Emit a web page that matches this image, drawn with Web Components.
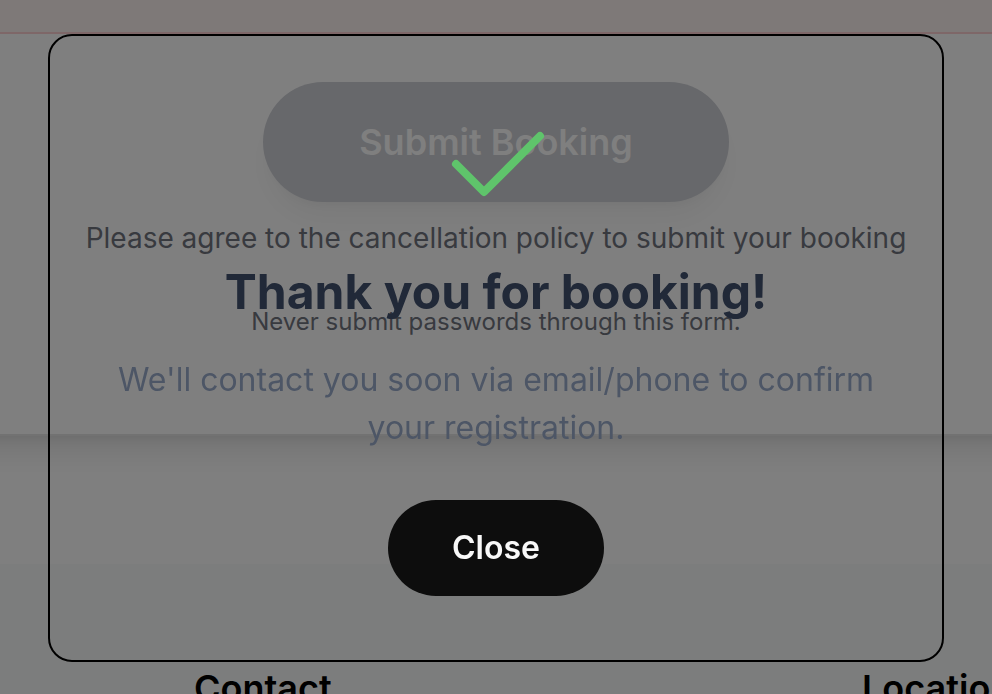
<!DOCTYPE html>
<html lang="en">
<head>
<meta charset="utf-8">
<meta name="viewport" content="width=device-width, initial-scale=1">
<title>Booking</title>
<style>
html, body { margin: 0; height: 100%; overflow: hidden; }
body { font-family: Inter, "Liberation Sans", sans-serif; background: #fff; color: #000; }
</style>
</head>
<body>
<booking-page>
  <booking-form>
    <span slot="action">Submit Booking</span>
    <span slot="hint">Please agree to the cancellation policy to submit your booking</span>
    <span slot="note">Never submit passwords through this form.</span>
  </booking-form>
  <page-footer slot="footer">
    <span slot="first">Contact</span>
    <span slot="second">Location</span>
  </page-footer>
  <thank-you-dialog slot="overlay">
    <span slot="title">Thank you for booking!</span>
    <span slot="message">We'll contact you soon via email/phone to confirm your registration.</span>
    <span slot="close">Close</span>
  </thank-you-dialog>
</booking-page>
<script>
function define(name, html) {
  const template = document.createElement('template');
  template.innerHTML = html;
  customElements.define(name, class extends HTMLElement {
    constructor() {
      super();
      this.attachShadow({ mode: 'open' }).append(template.content.cloneNode(true));
    }
  });
}

define('booking-page', `
<style>
  :host { display: block; height: 100vh; overflow: hidden; }
  .banner { height: 32px; background: #fdf3f0; border-bottom: 2px solid #fed0d2; }
  main { padding-bottom: 128px; }
</style>
<div class="banner"></div>
<main><slot></slot></main>
<slot name="footer"></slot>
<slot name="overlay"></slot>`);

define('booking-form', `
<style>
  :host { display: block; }
  form {
    display: flex; flex-direction: column; align-items: center;
    margin: 0 -48px; padding: 48px 96px 96px; text-align: center; background: #fff;
    border-bottom: 2px solid #e5e5e5;
    box-shadow: 0 20px 30px -6px rgba(0,0,0,.1), 0 8px 12px -8px rgba(0,0,0,.1);
  }
  button {
    padding: 32px 96px; border: 0; border-radius: 60px;
    font: 600 36px/56px Inter, "Liberation Sans", sans-serif;
    background: #ced0d6; color: #fff;
    box-shadow: 0 20px 30px -6px rgba(0,0,0,.05), 0 8px 12px -8px rgba(0,0,0,.05);
  }
  p { margin: 0; color: #71747e; }
  .hint { margin-top: 16px; font-size: 28px; line-height: 40px; }
  .note { margin-top: 48px; font-size: 24px; line-height: 32px; }
</style>
<form>
  <button type="button" disabled><slot name="action"></slot></button>
  <p class="hint"><slot name="hint"></slot></p>
  <p class="note"><slot name="note"></slot></p>
</form>`);

define('page-footer', `
<style>
  :host { display: block; }
  footer {
    display: grid; grid-template-columns: minmax(0, 1fr) 130px;
    padding: 96px 0 96px 194px; overflow: hidden; white-space: nowrap;
    background: #f8fbfa;
  }
  h2 { margin: 0; font-size: 36px; line-height: 56px; font-weight: 600; }
</style>
<footer>
  <h2><slot name="first"></slot></h2>
  <h2><slot name="second"></slot></h2>
</footer>`);

define('thank-you-dialog', `
<style>
  :host {
    position: fixed; inset: 0; display: flex; align-items: flex-start;
    padding: 34px 48px; background: rgba(0,0,0,.5);
  }
  section {
    flex: 1; display: flex; flex-direction: column; align-items: center;
    padding: 64px; border: 2px solid #000; border-radius: 24px; text-align: center;
  }
  svg { width: 128px; height: 128px; }
  h1 { margin: 32px 0; font-size: 48px; line-height: 64px; font-weight: 700; color: #212938; }
  p { margin: 0 0 48px; font-size: 32px; line-height: 48px; color: #4d5666; }
  button {
    padding: 24px 64px; border: 0; border-radius: 48px;
    font: 600 32px/48px Inter, "Liberation Sans", sans-serif;
    background: #0d0d0d; color: #f8f8f8;
  }
</style>
<section role="dialog" aria-modal="true" aria-labelledby="title">
  <svg viewBox="0 0 128 128" fill="none" stroke="#5fc46b" stroke-width="8" stroke-linecap="round" stroke-linejoin="round" aria-hidden="true"><path d="M24 64l28 28 56-56"/></svg>
  <h1 id="title"><slot name="title"></slot></h1>
  <p><slot name="message"></slot></p>
  <button type="button"><slot name="close"></slot></button>
</section>`);
</script>
</body>
</html>
